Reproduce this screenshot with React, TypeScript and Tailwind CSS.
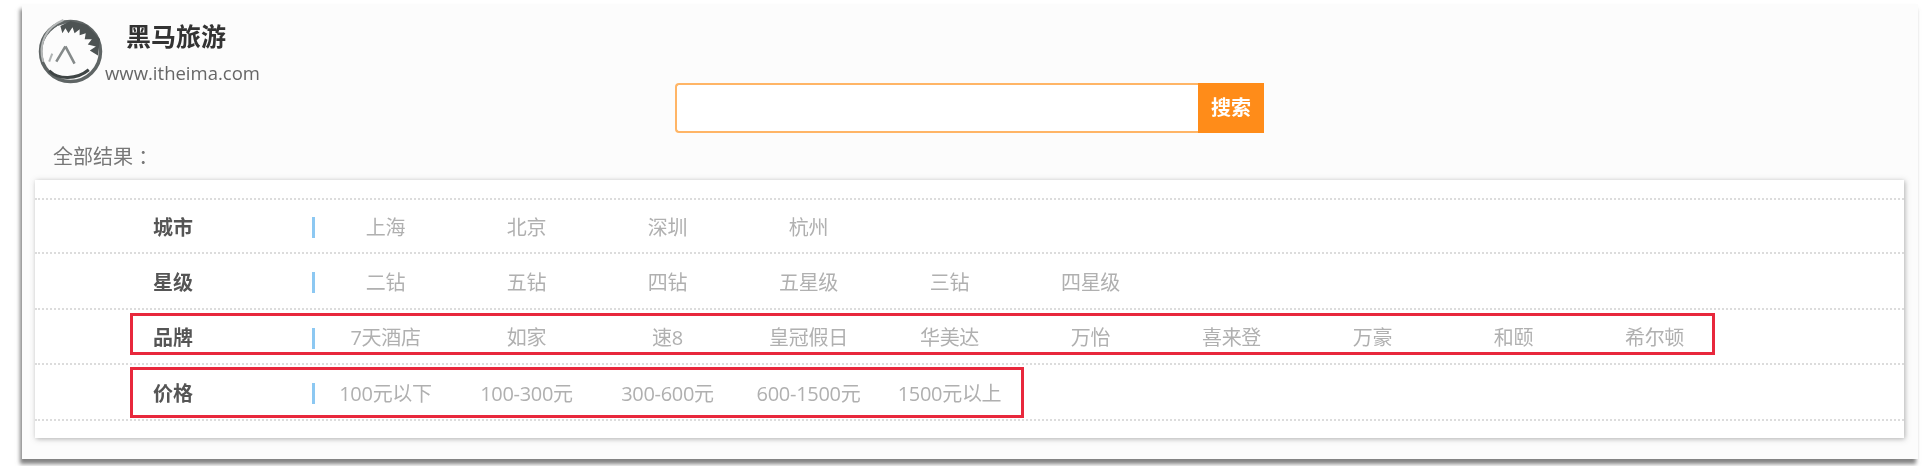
const FONT = "font-['Open_Sans','Noto_Sans_CJK_SC',sans-serif]";

const rows = [
  { label: "城市", items: ["上海", "北京", "深圳", "杭州"], h: "h-[54px]" },
  { label: "星级", items: ["二钻", "五钻", "四钻", "五星级", "三钻", "四星级"], h: "h-[56px]" },
  {
    label: "品牌",
    items: ["7天酒店", "如家", "速8", "皇冠假日", "华美达", "万怡", "喜来登", "万豪", "和颐", "希尔顿"],
    h: "h-[55px]",
  },
  { label: "价格", items: ["100元以下", "100-300元", "300-600元", "600-1500元", "1500元以上"], h: "h-[56px]" },
];

function Logo() {
  return (
    <svg width="65" height="65" viewBox="0 0 64 64" className="-ml-[1px] mt-[1px] shrink-0">
      <circle cx="32" cy="32" r="29.5" fill="none" stroke="#5f6565" strokeWidth="3.5" />
      <path d="M5 42 C0 24 8 8 25 1" fill="none" stroke="#b5b8b8" strokeWidth="2" />
      <path d="M9 38 C7 25 12 15 21 8" fill="none" stroke="#fcfcfc" strokeWidth="4" />
      <path
        d="M22 7 L24 14 L27 9 L30 14 L34 8 L36 14 L41 10 L41 16 L47 14 L46 20 L53 20 L49 25 L57 27 L51 31 L59 36 L61 20 L48 6 L32 2 Z"
        fill="#4d5353"
      />
      <path d="M27 27 L18 42 M27 27 L36 44" fill="none" stroke="#858a8a" strokeWidth="2.5" />
      <path d="M14 34 L11 42" fill="none" stroke="#b0b4b4" strokeWidth="2" />
      <path d="M11 51 C20 60 38 60 50 50" fill="none" stroke="#3f4545" strokeWidth="3" />
    </svg>
  );
}

export default function App() {
  return (
    <div className={`w-[1923px] h-[466px] overflow-hidden bg-white pl-[22px] pr-[5px] pt-[4px] ${FONT}`}>
      <div className="h-[455px] bg-[#fcfcfc] pt-[14px] shadow-[-2px_5px_4px_rgba(90,90,90,0.75)] blur-[0.7px]">
        <div className="flex h-[65px] pl-[17px]">
          <Logo />
          <div className="ml-[2px] flex flex-col">
            <div className="pl-[21px] text-[25px] leading-[36px] font-bold text-[#333]">黑马旅游</div>
            <div className="mt-[5px] text-[18.5px] leading-[28px] text-[#666]">www.itheima.com</div>
          </div>
        </div>

        <div className="ml-[653px] flex h-[50px] w-[589px]">
          <div className="flex-1 rounded-l-[4px] border-2 border-r-0 border-[#ffb566] bg-white" />
          <div className="flex w-[66px] items-center justify-center bg-[#ff8c19] text-[20px] font-bold text-white">
            搜索
          </div>
        </div>

        <div className="mt-[10px] ml-[31px] h-[37px] text-[20px] leading-[28px] text-[#777]">全部结果 ：</div>

        <div className="relative ml-[13px] mr-[14px] h-[258px] bg-white pt-[18px] shadow-[1px_1px_5px_rgba(100,100,100,0.5)]">
          <div className="border-t-2 border-dotted border-[#dcdcdc]">
            {rows.map((row) => (
              <div
                key={row.label}
                className={`flex items-center border-b-2 border-dotted border-[#dcdcdc] pt-[3px] ${row.h}`}
              >
                <div className="w-[118px] shrink-0 ml-[118px] text-[20px] font-bold text-[#555]">{row.label}</div>
                <div className="ml-[41px] h-[21px] w-[3px] shrink-0 bg-[#8cc8f2]" />
                {row.items.map((item) => (
                  <div key={item} className="w-[141px] shrink-0 text-center text-[20px] tracking-[-0.3px] whitespace-nowrap text-[#b0b0b0]">
                    {item}
                  </div>
                ))}
              </div>
            ))}
          </div>
          {/* red annotation boxes drawn over the table */}
          <div className="absolute top-[133px] left-[95px] h-[42px] w-[1585px] border-[3px] border-[#e8283c]" />
          <div className="absolute top-[187px] left-[95px] h-[51px] w-[894px] border-[3px] border-[#e8283c]" />
        </div>
      </div>
    </div>
  );
}
